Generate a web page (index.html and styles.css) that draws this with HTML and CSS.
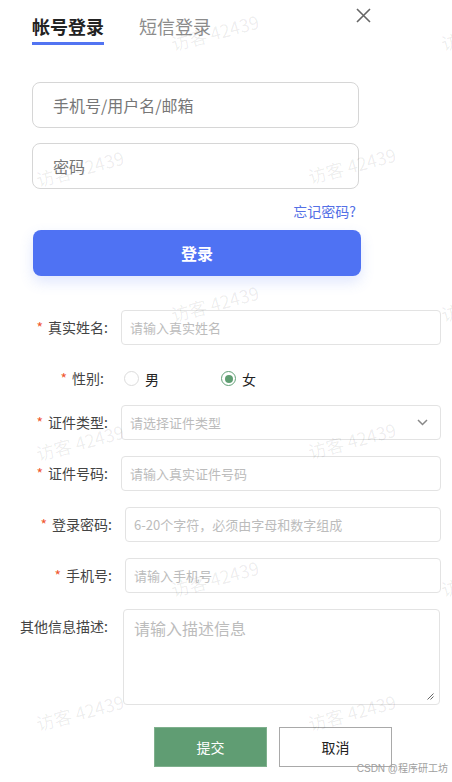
FILE: index.html
```html
<!DOCTYPE html>
<html lang="zh-CN">
<head>
<meta charset="utf-8">
<title>登录</title>
<link rel="stylesheet" href="styles.css">
</head>
<body>
<div class="page">
  <div class="login">
    <div class="tabs-row">
      <div class="tabs">
        <span class="tab active">帐号登录</span>
        <span class="tab">短信登录</span>
      </div>
      <span class="close">
        <svg width="15" height="15" viewBox="0 0 15 15"><path d="M1 1L14 14M14 1L1 14" stroke="#666" stroke-width="1.6" fill="none"/></svg>
      </span>
    </div>
    <div class="big-input"><span class="ph">手机号/用户名/邮箱</span></div>
    <div class="big-input"><span class="ph">密码</span></div>
    <div class="forgot"><span>忘记密码?</span></div>
    <div class="login-btn">登录</div>
  </div>

  <div class="reg">
    <div class="row">
      <div class="label"><span class="star">*</span>真实姓名:</div>
      <div class="box"><span class="ph2">请输入真实姓名</span></div>
    </div>
    <div class="row radio-row">
      <div class="label"><span class="star">*</span>性别:</div>
      <div class="radios">
        <span class="opt"><span class="radio"></span>男</span>
        <span class="opt"><span class="radio checked"></span>女</span>
      </div>
    </div>
    <div class="row">
      <div class="label"><span class="star">*</span>证件类型:</div>
      <div class="box select"><span class="ph2">请选择证件类型</span>
        <svg class="chev" width="11" height="7" viewBox="0 0 11 7"><path d="M1 1L5.5 5.5L10 1" stroke="#888" stroke-width="1.5" fill="none"/></svg>
      </div>
    </div>
    <div class="row">
      <div class="label"><span class="star">*</span>证件号码:</div>
      <div class="box"><span class="ph2">请输入真实证件号码</span></div>
    </div>
    <div class="row wide">
      <div class="label"><span class="star">*</span>登录密码:</div>
      <div class="box"><span class="ph2">6-20个字符，必须由字母和数字组成</span></div>
    </div>
    <div class="row wide">
      <div class="label"><span class="star">*</span>手机号:</div>
      <div class="box"><span class="ph2">请输入手机号</span></div>
    </div>
    <div class="row area-row">
      <div class="label">其他信息描述:</div>
      <div class="area"><span class="ph3">请输入描述信息</span>
        <svg class="grip" width="7" height="7" viewBox="0 0 7 7"><path d="M6.5 0.5L0.5 6.5M6.5 3.5L3.5 6.5" stroke="#666" stroke-width="1" fill="none"/></svg>
      </div>
    </div>
    <div class="actions">
      <span class="btn submit">提交</span>
      <span class="btn cancel">取消</span>
    </div>
  </div>
</div>

<div class="watermarks">
  <span class="wm" style="left:170px;top:20px">访客 42439</span>
  <span class="wm" style="left:440px;top:20px">访客 42439</span>
  <span class="wm" style="left:35px;top:156px">访客 42439</span>
  <span class="wm" style="left:307px;top:153px">访客 42439</span>
  <span class="wm" style="left:170px;top:291px">访客 42439</span>
  <span class="wm" style="left:440px;top:291px">访客 42439</span>
  <span class="wm" style="left:35px;top:430px">访客 42439</span>
  <span class="wm" style="left:307px;top:428px">访客 42439</span>
  <span class="wm" style="left:170px;top:566px">访客 42439</span>
  <span class="wm" style="left:440px;top:566px">访客 42439</span>
  <span class="wm" style="left:35px;top:700px">访客 42439</span>
  <span class="wm" style="left:307px;top:700px">访客 42439</span>
</div>
<div class="csdn">CSDN @程序研工坊</div>
</body>
</html>
```

FILE: styles.css
```css
html, body {
  margin: 0;
  padding: 0;
  background: #fff;
}
body {
  font-family: "Noto Sans CJK SC", "Noto Sans", "Liberation Sans", sans-serif;
  color: #333;
  position: relative;
  width: 452px;
  height: 782px;
  overflow: hidden;
}
.page {
  display: flex;
  flex-direction: column;
}
.login {
  padding-left: 32px;
  width: 329px;
  display: flex;
  flex-direction: column;
}
.tabs-row {
  display: flex;
  justify-content: space-between;
  align-items: flex-start;
  padding-top: 8px;
  width: 339px;
}
.tabs {
  display: flex;
  gap: 35px;
  margin-top: 6px;
}
.tab {
  font-size: 18px;
  line-height: 24px;
  padding-bottom: 4px;
  border-bottom: 3px solid transparent;
  color: #8c8c8c;
}
.tab.active {
  color: #222;
  font-weight: 700;
  border-bottom-color: #5274f2;
}
.close {
  display: flex;
  width: 15px;
  height: 15px;
}
.big-input {
  box-sizing: border-box;
  width: 327px;
  height: 46px;
  border: 1px solid #d6d6d6;
  border-radius: 8px;
  display: flex;
  align-items: center;
  padding-left: 20px;
  margin-bottom: 15px;
}
.tabs-row + .big-input {
  margin-top: 37px;
}
.ph {
  font-size: 16px;
  color: #777;
  line-height: 22px;
}
.big-input + .big-input + .forgot { margin-top: -3px; }
.forgot {
  width: 324px;
  display: flex;
  justify-content: flex-end;
  font-size: 14px;
  line-height: 20px;
  color: #5470e6;
}
.login-btn {
  margin-top: 9px;
  margin-left: 1px;
  width: 328px;
  height: 46px;
  border-radius: 8px;
  background: #4f72f3;
  box-shadow: 0 6px 14px rgba(79, 114, 243, 0.18);
  color: #fff;
  font-size: 16px;
  font-weight: 700;
  display: flex;
  align-items: center;
  justify-content: center;
}
.reg {
  margin-top: 34px;
  padding-right: 11px;
  display: flex;
  flex-direction: column;
  gap: 16px;
}
.row {
  display: flex;
  align-items: flex-start;
  gap: 13px;
}
.label {
  width: 108px;
  flex: none;
  text-align: right;
  font-size: 14px;
  line-height: 35px;
  color: #444;
  white-space: nowrap;
}
.row.wide .label { width: 112px; }
.star {
  color: #f0582f;
  margin-right: 5px;
}
.box {
  flex: 1;
  box-sizing: border-box;
  height: 35px;
  border: 1px solid #e3e3e3;
  border-radius: 4px;
  display: flex;
  align-items: center;
  padding-left: 8px;
  padding-right: 12px;
}
.ph2 {
  font-size: 13px;
  color: #bcbcbc;
  line-height: 18px;
}
.select {
  justify-content: space-between;
}
.radio-row {
  margin-bottom: -7px;
}
.radio-row .label {
  width: 104px;
}
.radios {
  display: flex;
  align-items: center;
  height: 35px;
  padding-left: 7px;
}
.opt {
  display: flex;
  align-items: center;
  gap: 6px;
  font-size: 14px;
  color: #222;
  width: 97px;
}
.radio {
  box-sizing: border-box;
  width: 15px;
  height: 15px;
  border-radius: 50%;
  border: 1px solid #dcdcdc;
  background: #fff;
  display: flex;
  align-items: center;
  justify-content: center;
}
.radio.checked {
  border: 1.5px solid #63a178;
}
.radio.checked::after {
  content: "";
  width: 8px;
  height: 8px;
  border-radius: 50%;
  background: #5f9e72;
}
.area {
  flex: 1;
  box-sizing: border-box;
  height: 96px;
  border: 1px solid #e3e3e3;
  border-radius: 4px;
  padding: 6px 10px;
  position: relative;
  margin-left: 2px;
  margin-right: 1px;
}
.ph3 {
  font-size: 16px;
  line-height: 22px;
  color: #bcbcbc;
}
.grip {
  position: absolute;
  right: 5px;
  bottom: 4px;
}
.actions {
  display: flex;
  gap: 12px;
  padding-left: 154px;
  margin-top: 6px;
}
.btn {
  box-sizing: border-box;
  width: 113px;
  height: 40px;
  display: flex;
  align-items: center;
  justify-content: center;
  font-size: 14px;
}
.submit {
  background: #609d73;
  color: #fff;
  border: 1px solid #7fb08d;
}
.cancel {
  background: #fff;
  color: #222;
  border: 1px solid #a9a9a9;
}
.watermarks {
  position: absolute;
  inset: 0;
  pointer-events: none;
  overflow: hidden;
}
.wm {
  position: absolute;
  font-size: 18px;
  line-height: 24px;
  white-space: nowrap;
  color: rgba(0, 0, 0, 0.07);
  transform: rotate(-15deg);
  transform-origin: center;
}
.csdn {
  position: absolute;
  right: 4px;
  top: 763px;
  font-size: 10px;
  line-height: 12px;
  color: #a0a0a0;
  font-family: "Liberation Sans", "Noto Sans CJK SC", sans-serif;
}
```
